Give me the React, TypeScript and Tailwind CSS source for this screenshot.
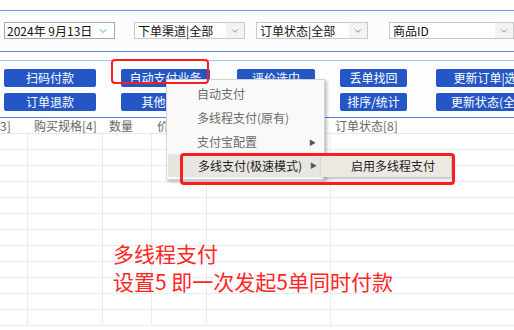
import { ChevronDown } from 'lucide-react';

const CJK = "font-['Microsoft_YaHei','Noto_Sans_CJK_SC',sans-serif]";

const row1 = [
  { label: '扫码付款', w: 'w-[92px]', ml: 'ml-[4px]' },
  { label: '自动支付业务', w: 'w-[89px]', ml: 'ml-[25px]' },
  { label: '评价选中', w: 'w-[78px]', ml: 'ml-[27px]' },
  { label: '丢单找回', w: 'w-[67px]', ml: 'ml-[25px]' },
  { label: '更新订单|选中', w: 'w-[110px]', ml: 'ml-[29px]' },
];

const row2 = [
  { label: '订单退款', w: 'w-[92px]', ml: 'ml-[4px]' },
  { label: '其他评价', w: 'w-[89px]', ml: 'ml-[25px]' },
  { label: '批量评价', w: 'w-[78px]', ml: 'ml-[27px]' },
  { label: '排序/统计', w: 'w-[67px]', ml: 'ml-[25px]' },
  { label: '更新状态(全部)', w: 'w-[110px]', ml: 'ml-[29px]' },
];

function Btn({ label, w, ml }: { label: string; w: string; ml: string }) {
  return (
    <div className={`${w} ${ml} h-[18px] shrink-0 rounded-[2px] bg-[#2457c5] text-white text-[12px] leading-[18px] text-center whitespace-nowrap overflow-hidden`}>
      {label}
    </div>
  );
}

function Select({ text, w, ml }: { text: string; w: string; ml: string }) {
  return (
    <div className={`${w} ${ml} h-[17px] shrink-0 flex border border-[#c9c9c9] bg-white`}>
      <span className="flex-1 pl-[3px] text-[12px] leading-[15px] text-[#111] whitespace-nowrap">{text}</span>
      <span className="w-[18px] flex items-center justify-center bg-[#f3f3f3]">
        <ChevronDown size={10} strokeWidth={2} className="text-[#777]" />
      </span>
    </div>
  );
}

const cols = [
  { w: 'w-[28px]', head: '3]', pl: 'pl-0' },
  { w: 'w-[75px]', head: '购买规格[4]', pl: 'pl-[6px]' },
  { w: 'w-[49px]', head: '数量', pl: 'pl-[6px]' },
  { w: 'w-[55px]', head: '价格', pl: 'pl-[5px]' },
  { w: 'w-[124px]', head: '', pl: 'pl-[4px]' },
  { w: 'w-[183px]', head: '订单状态[8]', pl: 'pl-[4px]' },
];

export default function App() {
  return (
    <div className={`relative w-[514px] h-[330px] overflow-hidden bg-white ${CJK}`}>
      <div className="h-[10px]" />

      {/* filter bar */}
      <div className="h-[41px] border-t border-[#6d9be8] bg-[#fcfcff] flex items-center pb-[1px]">
        <div className="ml-[4px] w-[111px] h-[17px] shrink-0 flex border border-[#a8a8a8] bg-white">
          <span className="flex-1 pl-[2px] text-[12px] leading-[15px] text-[#111] whitespace-nowrap">2024年 9月13日</span>
          <span className="w-[22px] flex items-center justify-center">
            <ChevronDown size={12} strokeWidth={2} className="text-[#3aa9e0]" />
          </span>
        </div>
        <Select text="下单渠道|全部" w="w-[111px]" ml="ml-[19px]" />
        <Select text="订单状态|全部" w="w-[112px]" ml="ml-[11px]" />
        <Select text="商品ID" w="w-[125px]" ml="ml-[21px]" />
      </div>
      <div className="h-[9px] border-t border-[#5587e0] bg-[#fdfdff]" />

      {/* buttons */}
      <div className="h-[57px] border-t border-[#a9c2f0] bg-[#fdfdff] flex flex-col gap-[6px] pt-[8px]">
        <div className="flex">
          {row1.map((b) => <Btn key={b.label} {...b} />)}
        </div>
        <div className="flex">
          {row2.map((b) => <Btn key={b.label} {...b} />)}
        </div>
      </div>

      {/* table */}
      <div className="border-t border-[#4a7fe0]">
        <div className="flex h-[16px] border-b border-[#e8e8e8]">
          {cols.map((c, i) => (
            <div key={i} className={`${c.w} ${c.pl} shrink-0 text-[12px] leading-[15px] text-[#666] whitespace-nowrap overflow-hidden`}>
              {c.head}
            </div>
          ))}
        </div>
        {Array.from({ length: 12 }).map((_, r) => (
          <div key={r} className="flex h-[16px] border-b border-[#ececec]">
            {cols.map((c, i) => (
              <div key={i} className={`${c.w} shrink-0 ${i < cols.length - 1 ? 'border-r border-[#ececec]' : ''}`} />
            ))}
          </div>
        ))}
      </div>

      {/* context menu */}
      <div className="absolute left-[166px] top-[79px] w-[159px] py-[2px] bg-[#f9f9f9] border border-[#d4d4d4] shadow-[2px_2px_3px_rgba(0,0,0,0.25)] text-[12px] text-[#6a6a6a]">
        <div className="h-[24px] leading-[24px] pl-[30px]">自动支付</div>
        <div className="h-[24px] leading-[24px] pl-[30px]">多线程支付(原有)</div>
        <div className="h-[24px] leading-[24px] pl-[30px] flex justify-between pr-[8px]">
          <span>支付宝配置</span>
          <span className="text-[7px] text-[#555]">▶</span>
        </div>
        <div className="h-[23px] leading-[23px] pl-[30px] flex justify-between pr-[6px] bg-[#e8e6e1] text-[#222] mx-[1px]">
          <span>多线支付(极速模式)</span>
          <span className="text-[7px] text-[#555]">▶</span>
        </div>
      </div>

      {/* submenu */}
      <div className="absolute left-[320px] top-[154px] w-[131px] h-[23px] bg-[#ece9e3] border-l border-[#d8d6d0] shadow-[2px_2px_3px_rgba(0,0,0,0.25)] pl-[30px] text-[12px] leading-[23px] text-[#222]">
        启用多线程支付
      </div>

      {/* highlight boxes */}
      <div className="absolute left-[111px] top-[59px] w-[98px] h-[25px] border-2 border-[#ff1e1e] rounded-[4px]" />
      <div className="absolute left-[180px] top-[153px] w-[275px] h-[32px] border-[3px] border-[#ff1e1e] rounded-[4px]" />

      {/* annotation */}
      <div className="absolute left-[113px] top-[239px] text-[21px] leading-[28px] text-[#ff2626] whitespace-nowrap">
        <div>多线程支付</div>
        <div>设置5 即一次发起5单同时付款</div>
      </div>
    </div>
  );
}
